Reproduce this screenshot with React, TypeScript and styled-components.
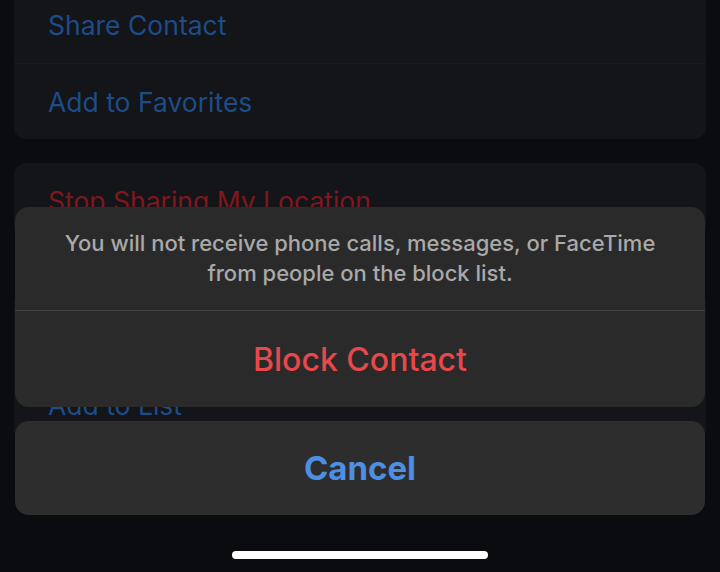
import styled, { createGlobalStyle } from "styled-components";

const GlobalStyle = createGlobalStyle`
  html, body {
    margin: 0;
    padding: 0;
    background: #0a0c10;
  }
  body {
    font-family: Inter, "Liberation Sans", sans-serif;
    -webkit-font-smoothing: antialiased;
  }
`;

const Screen = styled.div`
  position: relative;
  width: 720px;
  height: 572px;
  overflow: hidden;
  background: #0a0c10;
`;

const ListPage = styled.div`
  display: flex;
  flex-direction: column;
  padding: 0 14px;
  margin-top: -13px;
`;

const Group = styled.div<{ $gap?: number }>`
  margin-top: ${(p) => p.$gap ?? 0}px;
  background: #141518;
  border-radius: 12px;
  display: flex;
  flex-direction: column;
`;

const Row = styled.div<{ $tone: "blue" | "red" }>`
  height: 76px;
  display: flex;
  align-items: center;
  padding-left: 34px;
  font-size: 26.5px;
  color: ${(p) => (p.$tone === "blue" ? "#1d4c89" : "#80171f")};
  & + & {
    border-top: 1px solid #191b1f;
    height: 75px;
  }
`;

const Overlay = styled.div`
  position: absolute;
  inset: 0;
  display: flex;
  flex-direction: column;
  justify-content: flex-end;
  align-items: center;
  padding: 0 15px 13px;
`;

const Sheet = styled.div`
  width: 100%;
  background: #2a2a2a;
  border-radius: 14px;
  overflow: hidden;
  display: flex;
  flex-direction: column;
`;

const Message = styled.div`
  padding: 21px 20px 22px;
  text-align: center;
  font-size: 22px;
  line-height: 30px;
  font-weight: 500;
  color: #a9a9a9;
  border-bottom: 1px solid #444444;
`;

const SheetButton = styled.div<{ $variant: "destructive" | "cancel" }>`
  height: ${(p) => (p.$variant === "cancel" ? 94 : 96)}px;
  display: flex;
  align-items: center;
  justify-content: center;
  font-size: ${(p) => (p.$variant === "cancel" ? 33 : 32)}px;
  font-weight: ${(p) => (p.$variant === "cancel" ? 700 : 500)};
  color: ${(p) => (p.$variant === "cancel" ? "#4d8fe3" : "#e6484b")};
`;

const CancelSheet = styled(Sheet)`
  margin-top: 14px;
  background: #2c2d2c;
`;

const HomeIndicator = styled.div`
  margin-top: 36px;
  width: 256px;
  height: 8px;
  border-radius: 4px;
  background: #ffffff;
`;

export default function App() {
  return (
    <>
      <GlobalStyle />
      <Screen>
        <ListPage>
          <Group>
            <Row $tone="blue">Share Contact</Row>
            <Row $tone="blue">Add to Favorites</Row>
          </Group>
          <Group $gap={24}>
            <Row $tone="red">Stop Sharing My Location</Row>
          </Group>
          <Group $gap={51}>
            <Row $tone="blue">Add to Emergency Contacts</Row>
            <Row $tone="blue">Add to List</Row>
          </Group>
        </ListPage>
        <Overlay>
          <Sheet>
            <Message>
              You will not receive phone calls, messages, or FaceTime
              <br />
              from people on the block list.
            </Message>
            <SheetButton $variant="destructive">Block Contact</SheetButton>
          </Sheet>
          <CancelSheet>
            <SheetButton $variant="cancel">Cancel</SheetButton>
          </CancelSheet>
          <HomeIndicator />
        </Overlay>
      </Screen>
    </>
  );
}
